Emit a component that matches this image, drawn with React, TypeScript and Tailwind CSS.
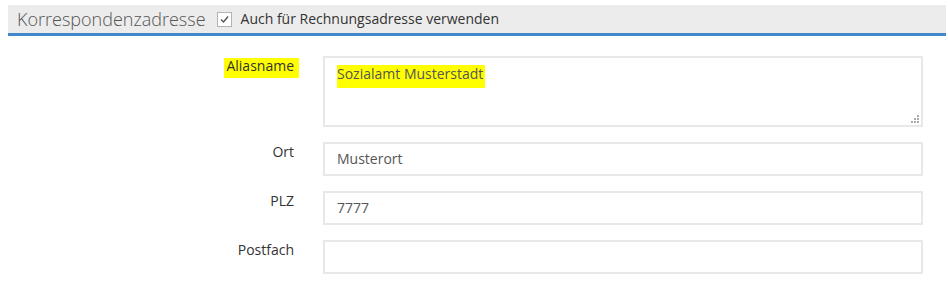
import React from "react";

function Row({ label, children, highlight }: { label: string; children: React.ReactNode; highlight?: boolean }) {
  return (
    <div className="flex">
      <div className="w-[294px] text-right text-[14px] leading-[20px] text-[#333]">
        {highlight ? (
          <span className="relative inline-block">
            <span className="absolute left-[-2px] right-[-5px] top-[2px] bottom-[-2px] bg-[#ffff00]" />
            <span className="relative">{label}</span>
          </span>
        ) : (
          label
        )}
      </div>
      <div className="ml-[29px] w-[600px]">{children}</div>
    </div>
  );
}

function Input({ value }: { value?: string }) {
  return (
    <div className="h-[34px] border-2 border-[#e8e8e8] px-[12px] flex items-center text-[14px] leading-[20px] text-[#555]">
      {value}
    </div>
  );
}

export default function App() {
  return (
    <div className="bg-white w-[948px] h-[304px] pt-[5px] pl-[8px] pr-[2px]" style={{ fontFamily: '"Open Sans", sans-serif' }}>
      <div className="h-[31px] bg-[#ececec] border-b-[3px] border-[#4089cc] flex items-center pl-[9px]">
        <span className="text-[18px] font-light text-[#555] leading-[24px]">Korrespondenzadresse</span>
        <span className="ml-[11px] w-[15px] h-[15px] border border-[#b3b3b3] bg-white flex items-center justify-center">
          <svg width="11" height="11" viewBox="0 0 11 11">
            <path d="M2 5.5 L4.5 8 L9 2.5" fill="none" stroke="#555" strokeWidth="1.4" />
          </svg>
        </span>
        <span className="ml-[9px] text-[14px] text-[#333] leading-[20px]">Auch für Rechnungsadresse verwenden</span>
      </div>

      <div className="mt-[20px] -ml-[8px] flex flex-col">
        <Row label="Aliasname" highlight>
          <div className="relative h-[71px] border-2 border-[#e8e8e8] px-[12px] pt-[6px] text-[14px] leading-[20px] text-[#555]">
            <span className="relative inline-block">
              <span className="absolute left-[0px] right-[-2px] top-[1px] bottom-[-4px] bg-[#ffff00]" />
              <span className="relative">Sozialamt Musterstadt</span>
            </span>
            <svg className="absolute right-[1px] bottom-[1px]" width="9" height="9" viewBox="0 0 9 9">
              <rect x="6" y="0" width="2" height="2" fill="#aaa" />
              <rect x="3" y="3" width="2" height="2" fill="#aaa" />
              <rect x="6" y="3" width="2" height="2" fill="#aaa" />
              <rect x="0" y="6" width="2" height="2" fill="#aaa" />
              <rect x="3" y="6" width="2" height="2" fill="#aaa" />
              <rect x="6" y="6" width="2" height="2" fill="#aaa" />
            </svg>
          </div>
        </Row>
        <div className="h-[15px]" />
        <Row label="Ort">
          <Input value="Musterort" />
        </Row>
        <div className="h-[15px]" />
        <Row label="PLZ">
          <Input value="7777" />
        </Row>
        <div className="h-[15px]" />
        <Row label="Postfach">
          <Input />
        </Row>
      </div>
    </div>
  );
}
